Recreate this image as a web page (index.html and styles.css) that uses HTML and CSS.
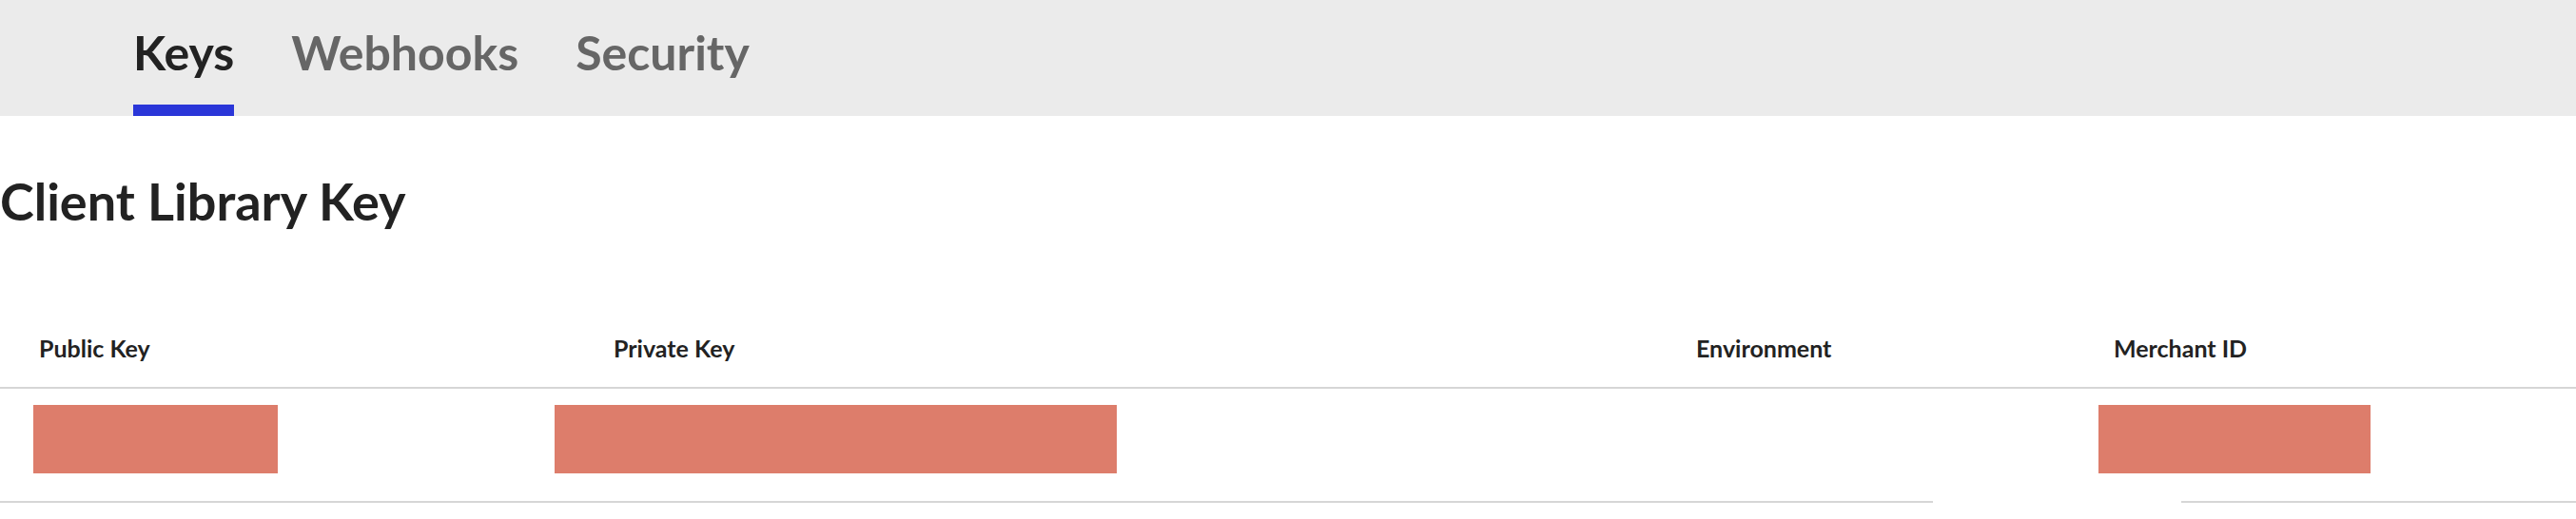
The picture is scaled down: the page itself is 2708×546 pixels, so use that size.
FILE: index.html
```html
<!DOCTYPE html>
<html>
<head>
    <title>Keys</title>
    <link rel="stylesheet" href="styles.css">
</head>
<body>
    <div class="tabbar">
        <a class="tab active" href="#">Keys</a>
        <a class="tab" href="#">Webhooks</a>
        <a class="tab" href="#">Security</a>
    </div>

    <div class="content">
        <h1>Client Library Key</h1>

        <div class="key-table">
            <div class="key-row head">
                <div class="cell">Public Key</div>
                <div class="cell">Private Key</div>
                <div class="cell">Environment</div>
                <div class="cell">Merchant ID</div>
            </div>
            <div class="key-row body">
                <div class="cell"><span class="redact redact-public"></span></div>
                <div class="cell"><span class="redact redact-private"></span></div>
                <div class="cell"></div>
                <div class="cell"><span class="redact redact-merchant"></span></div>
                <span class="border-gap"></span>
            </div>
        </div>
    </div>
</body>
</html>
```

FILE: styles.css
```css
* {
    margin: 0;
    padding: 0;
    box-sizing: border-box;
}

body {
    background-color: #ffffff;
    color: #222222;
    font-family: 'Lato', 'Open Sans', sans-serif;
    overflow: hidden;
}

.tabbar {
    height: 122px;
    background: #ebebeb;
    display: flex;
    gap: 60px;
    padding-left: 140px;
}

.tab {
    display: block;
    padding: 25px 0;
    font-size: 50px;
    font-weight: 700;
    line-height: 60px;
    color: #666666;
    text-decoration: none;
    border-bottom: 12px solid transparent;
}

.tab.active {
    color: #222222;
    border-bottom-color: #2a36d8;
}

h1 {
    font-size: 54px;
    font-weight: 700;
    line-height: 64px;
    margin: 58px 0 0 0;
    color: #222222;
}

.key-table {
    width: 100%;
}

.key-row {
    display: grid;
    grid-template-columns: 604px 1138px 439px 1fr;
    position: relative;
}

.key-row.head {
    border-bottom: 2px solid #d6d6d6;
}

.key-row.head .cell {
    padding: 107px 0 26px 41px;
    font-size: 25px;
    font-weight: 700;
    line-height: 30px;
}

.key-row.body {
    border-bottom: 2px solid #d6d6d6;
    padding: 17px 0 29px 0;
    height: 120px;
}

.redact {
    display: block;
    height: 72px;
    background: #dd7d6b;
}

.redact-public {
    width: 257px;
    margin-left: 35px;
}

.redact-private {
    width: 591px;
    margin-left: -21px;
}

.redact-merchant {
    width: 286px;
    margin-left: 25px;
}

/* white patch over the bottom rule */
.border-gap {
    position: absolute;
    left: 2032px;
    bottom: -2px;
    width: 261px;
    height: 2px;
    background: #ffffff;
}
```
